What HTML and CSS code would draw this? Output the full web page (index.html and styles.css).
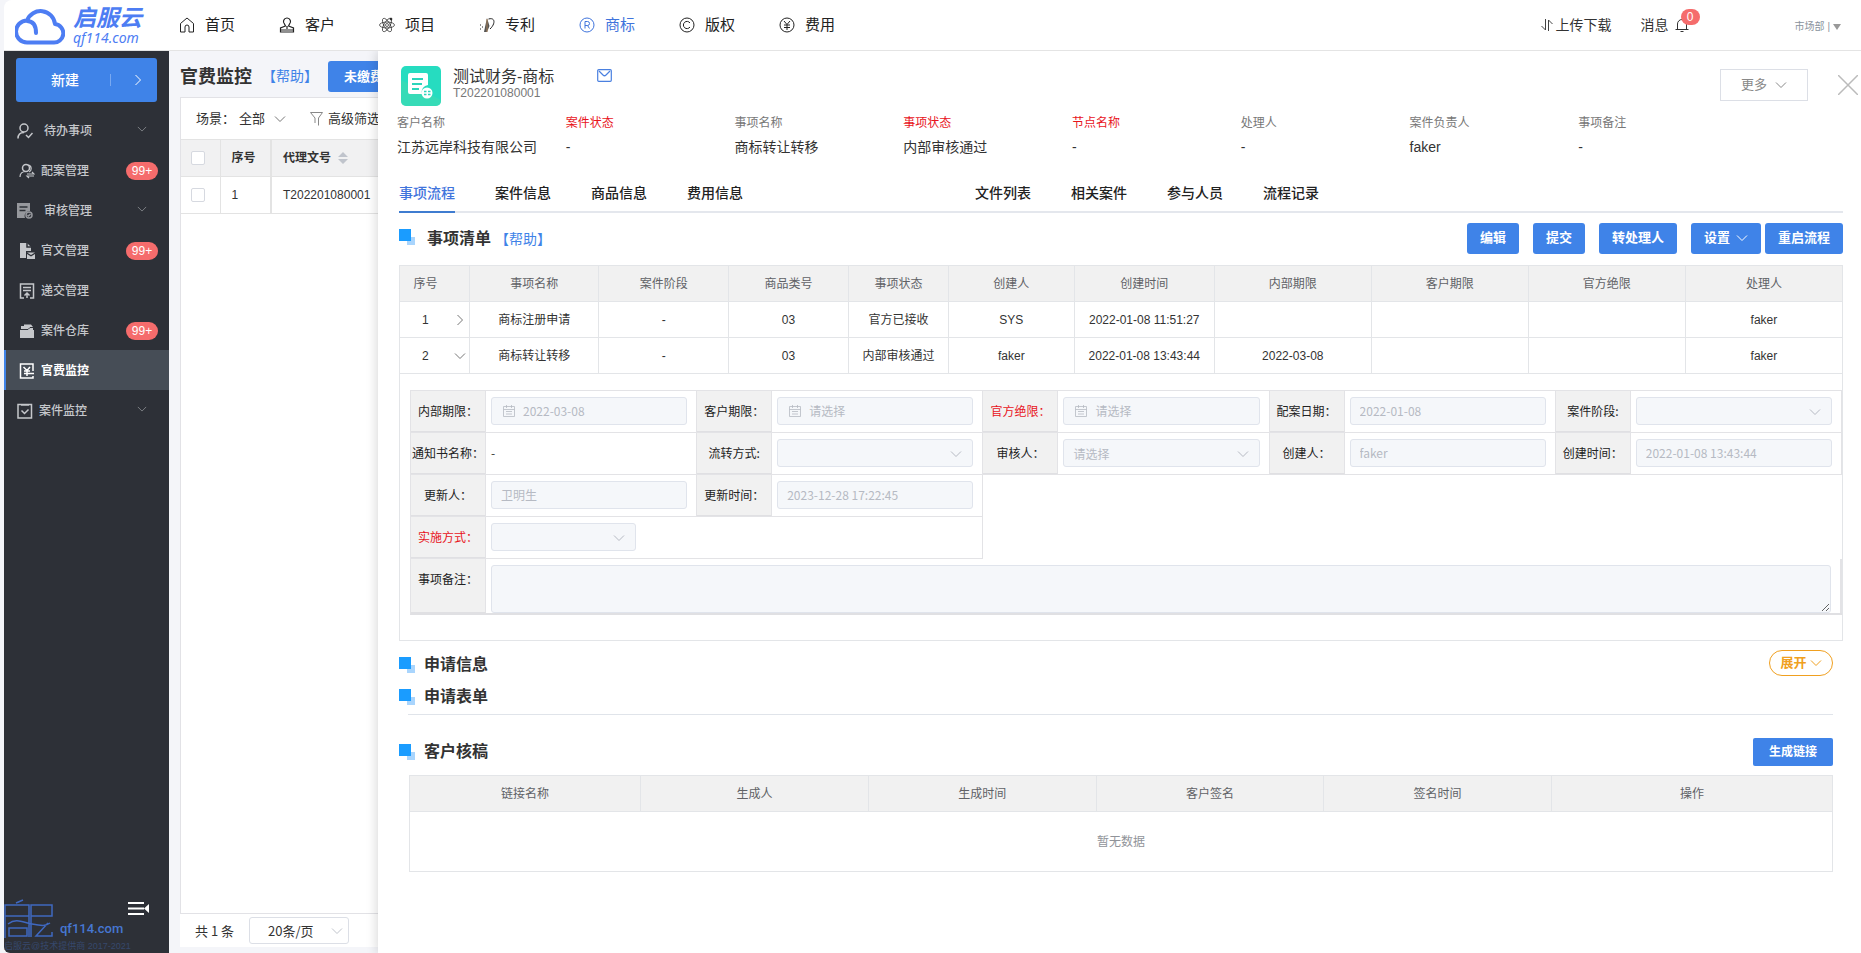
FILE: index.html
```html
<!DOCTYPE html>
<html lang="zh-CN">
<head>
<meta charset="utf-8">
<title>官费监控</title>
<link rel="stylesheet" href="styles.css">
</head>
<body>
<svg class="defs" aria-hidden="true">
  <symbol id="down" viewBox="0 0 12 12"><path d="M1 3.5l5 5 5-5" fill="none" stroke="currentColor"/></symbol>
  <symbol id="right" viewBox="0 0 12 12"><path d="M3.5 1l5 5-5 5" fill="none" stroke="currentColor"/></symbol>
  <symbol id="cal" viewBox="0 0 12 12"><path d="M.5 1.5h11v10H.5zM.5 4.5h11M3.5 0v3M8.500 0v3M3 6.500h6M3 9h6" fill="none" stroke="currentColor" stroke-width=".8"/></symbol>
</svg>
<header class="top">
  <a class="logo" href="#">
    <svg width="50" height="40" viewBox="0 0 50 40"><path d="M12 37.500h26a9 9 0 0 0 2-18.500A14.500 14.500 0 0 0 12 15.500 11 11 0 0 0 12 37.500zM12 16c5 0 9 3 9 12" fill="none" stroke="#4d7df3" stroke-width="4" stroke-linecap="round" stroke-linejoin="round"/></svg>
    <span class="logo-words"><b class="logo-name">启服云</b><i class="logo-site">qf114.com</i></span>
  </a>
  <nav class="nav">
    <a href="#"><svg width="16" height="16" viewBox="0 0 16 16"><path d="M1.500 6.500L8 1l6.500 5.500V15h-4.500v-5a2 2 0 0 0-4 0v5H1.500z"/></svg>首页</a>
    <a href="#"><svg width="16" height="16" viewBox="0 0 16 16"><path d="M8 1a3.500 3.500 0 0 1 2.500 6L9.500 9l5 2v4h-13v-4l5-2-1-2A3.500 3.500 0 0 1 8 1zM1.500 13h13M8 9v3" stroke-width="1.200"/></svg>客户</a>
    <a href="#"><svg width="16" height="16" viewBox="0 0 16 16" stroke-width=".7"><ellipse cx="8" cy="8" rx="7.500" ry="3"/><ellipse cx="8" cy="8" rx="7.500" ry="3" transform="rotate(60 8 8)"/><ellipse cx="8" cy="8" rx="7.500" ry="3" transform="rotate(120 8 8)"/><circle cx="8" cy="8" r="1.500"/><circle cx="12" cy="2" r="1" fill="#222"/></svg>项目</a>
    <a href="#"><svg width="16" height="16" viewBox="0 0 16 16"><path d="M9.500 2c7-2 7 5 1.500 10M1 8h1M3 10h1M1 12h1"/><path d="M8 1l2.500 8L8 15H5l1-5z" fill="#555" stroke="none"/><path d="M8 2v13" stroke="#a9825a"/></svg>专利</a>
    <a href="#" class="on"><svg width="16" height="16" viewBox="0 0 16 16"><circle cx="8" cy="8" r="7"/><path d="M6 11.500v-7h2.500a2 2 0 0 1 0 4H6M8.500 8.500l2 3"/></svg>商标</a>
    <a href="#"><svg width="16" height="16" viewBox="0 0 16 16"><circle cx="8" cy="8" r="7"/><path d="M11 6a3.600 3.600 0 1 0 0 4"/></svg>版权</a>
    <a href="#"><svg width="16" height="16" viewBox="0 0 16 16"><circle cx="8" cy="8" r="7"/><path d="M5 4l3 3.500L11 4M8 7.500V13M5 8h6M5 10.500h6"/></svg>费用</a>
  </nav>
  <div class="top-right">
    <a href="#" class="updown"><svg width="12" height="14" viewBox="0 0 12 14"><path d="M.5 8l4 4V1M7.500 13V2l4 4" fill="none" stroke="#444"/></svg>上传下载</a>
    <a href="#" class="msg">消息<span class="bell"><svg width="14" height="16" viewBox="0 0 14 16"><path d="M.5 12.500h13M2.500 12.500V7a4.500 4.500 0 0 1 9 0v5.500M5.500 14.500h3" fill="none" stroke="#333"/></svg><span class="dot">0</span></span></a>
    <button class="dept">市场部 |<svg width="8" height="6" viewBox="0 0 8 6"><path d="M0 0h8L4 6z" fill="#999"/></svg></button>
  </div>
</header>
<div class="body">
  <aside class="side">
    <button class="new"><span class="new-text">新建</span><span class="new-arrow"><svg width="12" height="12"><use href="#right"/></svg></span></button>
    <nav class="menu">
      <a href="#" class="wide"><svg class="ic" viewBox="0 0 16 16"><circle cx="7" cy="5" r="4"/><path d="M1 15.500c0-4 2-6 6-6M9 12l2.500 2.500L15.500 10"/></svg>待办事项<svg class="arrow"><use href="#down"/></svg></a>
      <a href="#"><svg class="ic" viewBox="0 0 16 16"><circle cx="7" cy="5" r="3.500"/><path d="M1 14c0-4 2-5.500 6-5.500M9 2c4 0 4 6 1 7M8 11h7l-2-2M15 13H8l2 2" stroke-width="1.200"/></svg>配案管理<span class="count">99+</span></a>
      <a href="#" class="wide dim"><svg class="ic" viewBox="0 0 16 16"><path d="M0 0h13v8a5 5 0 0 0-5 7H0z" class="solid"/><path d="M2.500 4h8M2.500 7.500h6" stroke="#2d3037"/><circle cx="12" cy="12" r="3" class="open"/><path d="M10.500 12l1 1 2-2"/></svg>审核管理<svg class="arrow"><use href="#down"/></svg></a>
      <a href="#"><svg class="ic" viewBox="0 0 16 16"><path d="M1 0h7l4 4v4H7v7H1z" class="solid"/><path d="M8 0v4h4" stroke="#2d3037"/><path d="M8 9.500h8l-4 2.500zM8 11l4 2.500 4-2.500v5H8z" class="solid"/></svg>官文管理<span class="count">99+</span></a>
      <a href="#"><svg class="ic" viewBox="0 0 16 16"><path d="M5 15H1.500V1h13v14H11M4 4.500h8M4 7.500h8M8 15v-5M5.500 12.500L8 10l2.500 2.500"/></svg>递交管理</a>
      <a href="#"><svg class="ic" viewBox="0 0 16 16"><path d="M2 7V3h3V1.500h7L14 4v3h1v8H1V7z" class="solid"/><path d="M2 6.500h7l2-2h4" stroke="#2d3037" stroke-width="1"/></svg>案件仓库<span class="count">99+</span></a>
      <a href="#" class="active"><svg class="ic" viewBox="0 0 16 16"><path d="M14 8V1H1.500v14H14v-2M4.500 4L8 7.500 11 4M8 7.500V13M5 8h6M5 10.500h10"/></svg>官费监控</a>
      <a href="#" class="narrow"><svg class="ic" viewBox="0 0 16 16"><path d="M1 1.500h13.500V15H1zM4.500 7.500L7.500 10.500l4-4M4 2h8"/></svg>案件监控<svg class="arrow"><use href="#down"/></svg></a>
    </nav>
    <div class="side-foot">
      <button class="fold" aria-label="收起"><svg width="22" height="13" viewBox="0 0 22 13"><path d="M0 1h16M0 6.500h16M0 12h16" stroke="#fff" stroke-width="2"/><path d="M21 2v9l-5-4.500z" fill="#fff"/></svg></button>
      <div class="brand"><svg width="50" height="40" viewBox="0 0 50 40"><path d="M12 4l7-3M1 39V6h24v32M27 38V6h21v11H27M1 17h24M4 25c8-6 14-2 24 0s14 2 18-1M5 29h18v8H5zM44 24L32 37h16v-4" fill="none" stroke="#3f68c0" stroke-width="1.500"/></svg><span>qf114.com</span></div>
      <small class="copy">启服云@技术提供商 2017-2021</small>
    </div>
  </aside>
  <main class="main">
    <section class="list">
      <div class="list-head"><h1>官费监控</h1><a href="#" class="help">【帮助】</a><button class="btn unpaid">未缴费</button></div>
      <div class="panel">
        <div class="filters"><span>场景：</span><button class="plain">全部<svg width="12" height="12"><use href="#down"/></svg></button><button class="plain adv"><svg width="13" height="14" viewBox="0 0 13 14"><path d="M.5.5h12L8.500 6v7.500M5 11V6L.5.5" fill="none" stroke="#888"/></svg>高级筛选</button></div>
        <table class="grid">
          <thead><tr><th class="c-check"><input type="checkbox" aria-label="全选"></th><th class="c-no">序号</th><th>代理文号<svg class="sort" width="10" height="12" viewBox="0 0 10 12"><path d="M0 5l5-5 5 5zM0 7h10l-5 5z" fill="#c0c4cc"/></svg></th></tr></thead>
          <tbody><tr><td class="c-check"><input type="checkbox" aria-label="选择第1行"></td><td class="c-no">1</td><td>T202201080001</td></tr></tbody>
        </table>
      </div>
      <div class="pager"><span>共 1 条</span><span class="page-size"><select aria-label="每页条数"><option>20条/页</option></select><svg class="caret" width="12" height="12"><use href="#down"/></svg></span></div>
    </section>
    <section class="drawer">
      <div class="case">
        <svg class="case-icon" width="40" height="40" viewBox="0 0 40 40"><rect width="40" height="40" rx="5" fill="#26dcc0"/><path d="M0 14L40 34v1a5 5 0 0 1-5 5H5a5 5 0 0 1-5-5z" fill="#45d9ae" opacity=".5"/><path d="M9 7h16a2 2 0 0 1 2 2v10a7 7 0 0 0-6 9H9a2 2 0 0 1-2-2V9a2 2 0 0 1 2-2z" fill="#fff"/><path d="M11 13h11M11 18h10M11 23h7" stroke="#2bd5bb" stroke-width="2"/><circle cx="26" cy="27" r="5.500" fill="#fff"/><path d="M23 25.500h2.500M27 25.500h2.500M23 28.500h2.500M27 28.500h2.500" stroke="#2bd5bb" stroke-width="1.500"/></svg>
        <div class="case-name"><h2>测试财务-商标</h2><span>T202201080001</span></div>
        <svg class="mail" width="15" height="13" viewBox="0 0 15 13"><rect x=".7" y=".7" width="13.600" height="11.600" rx="1" fill="none" stroke="#4a80e0" stroke-width="1.200"/><path d="M2 2l4 4c1 1 2 1 3 0l4-4" fill="none" stroke="#4a80e0" stroke-width="1.200"/></svg>
        <button class="more">更多<svg width="12" height="12"><use href="#down"/></svg></button>
        <button class="close" aria-label="关闭"><svg width="20" height="20" viewBox="0 0 20 20"><path d="M0 0l20 20M20 0L0 20" stroke="#bbb" stroke-width="1.500"/></svg></button>
      </div>
      <dl class="facts">
        <div><dt>客户名称</dt><dd>江苏远岸科技有限公司</dd></div>
        <div><dt class="red">案件状态</dt><dd>-</dd></div>
        <div><dt>事项名称</dt><dd>商标转让转移</dd></div>
        <div><dt class="red">事项状态</dt><dd>内部审核通过</dd></div>
        <div><dt class="red">节点名称</dt><dd>-</dd></div>
        <div><dt>处理人</dt><dd>-</dd></div>
        <div><dt>案件负责人</dt><dd>faker</dd></div>
        <div><dt>事项备注</dt><dd>-</dd></div>
      </dl>
      <nav class="tabs"><a href="#" class="on">事项流程</a><a href="#">案件信息</a><a href="#">商品信息</a><a href="#">费用信息</a><a href="#" class="second">文件列表</a><a href="#">相关案件</a><a href="#">参与人员</a><a href="#">流程记录</a></nav>
      <div class="sec-head first"><i class="mark"></i><h3>事项清单</h3><a href="#" class="help">【帮助】</a>
        <div class="actions"><button class="btn">编辑</button><button class="btn">提交</button><button class="btn">转处理人</button><span class="pair"><button class="btn">设置<svg width="12" height="12"><use href="#down"/></svg></button><button class="btn">重启流程</button></span></div>
      </div>
      <table class="items">
        <colgroup><col class="w70"><col class="w130"><col class="w130"><col class="w120"><col class="w100"><col class="w126"><col class="w140"><col class="w157"><col class="w157"><col class="w157"><col class="w157"></colgroup>
        <thead><tr><th class="seq">序号</th><th>事项名称</th><th>案件阶段</th><th>商品类号</th><th>事项状态</th><th>创建人</th><th>创建时间</th><th>内部期限</th><th>客户期限</th><th>官方绝限</th><th>处理人</th></tr></thead>
        <tbody>
          <tr><td class="seq"><span class="seq-in">1<svg width="12" height="12"><use href="#right"/></svg></span></td><td>商标注册申请</td><td>-</td><td>03</td><td>官方已接收</td><td>SYS</td><td>2022-01-08 11:51:27</td><td></td><td></td><td></td><td>faker</td></tr>
          <tr><td class="seq"><span class="seq-in">2<svg width="12" height="12"><use href="#down"/></svg></span></td><td>商标转让转移</td><td>-</td><td>03</td><td>内部审核通过</td><td>faker</td><td>2022-01-08 13:43:44</td><td>2022-03-08</td><td></td><td></td><td>faker</td></tr>
          <tr><td colspan="11" class="detail">
            <form class="form">
              <div class="field"><label for="f1">内部期限：</label><div class="ctl cal"><input id="f1" value="2022-03-08" disabled><svg><use href="#cal"/></svg></div></div>
              <div class="field"><label for="f2">客户期限：</label><div class="ctl cal"><input id="f2" placeholder="请选择" disabled><svg><use href="#cal"/></svg></div></div>
              <div class="field"><label for="f3" class="red">官方绝限：</label><div class="ctl cal"><input id="f3" placeholder="请选择" disabled><svg><use href="#cal"/></svg></div></div>
              <div class="field"><label for="f4">配案日期：</label><div class="ctl"><input id="f4" value="2022-01-08" disabled></div></div>
              <div class="field"><label for="f5">案件阶段:</label><div class="ctl sel"><select id="f5" disabled><option></option></select><svg><use href="#down"/></svg></div></div>
              <div class="field"><span class="label">通知书名称：</span><div class="ctl">-</div></div>
              <div class="field"><label for="f6">流转方式:</label><div class="ctl sel"><select id="f6" disabled><option></option></select><svg><use href="#down"/></svg></div></div>
              <div class="field"><label for="f7">审核人：</label><div class="ctl sel"><select id="f7" disabled><option>请选择</option></select><svg><use href="#down"/></svg></div></div>
              <div class="field"><label for="f8">创建人：</label><div class="ctl"><input id="f8" value="faker" disabled></div></div>
              <div class="field"><label for="f9">创建时间：</label><div class="ctl"><input id="f9" value="2022-01-08 13:43:44" disabled></div></div>
              <div class="field"><label for="f10">更新人：</label><div class="ctl"><input id="f10" value="卫明生" disabled></div></div>
              <div class="field"><label for="f11">更新时间：</label><div class="ctl"><input id="f11" value="2023-12-28 17:22:45" disabled></div></div>
              <div class="field two"><label for="f12" class="red">实施方式：</label><div class="ctl"><div class="short sel"><select id="f12" disabled><option></option></select><svg><use href="#down"/></svg></div></div></div>
              <div class="field all"><label for="f13">事项备注：</label><div class="ctl"><textarea id="f13" disabled></textarea></div></div>
            </form>
          </td></tr>
        </tbody>
      </table>
      <div class="sec-head"><i class="mark"></i><h3>申请信息</h3><button class="expand">展开<svg width="12" height="12"><use href="#down"/></svg></button></div>
      <div class="sec-head"><i class="mark"></i><h3>申请表单</h3></div>
      <hr class="rule">
      <div class="sec-head review"><i class="mark"></i><h3>客户核稿</h3><button class="btn link">生成链接</button></div>
      <div class="links-wrap">
        <table class="links">
          <colgroup><col class="l-name"><col class="l"><col class="l"><col class="l"><col class="l"><col></colgroup>
          <thead><tr><th>链接名称</th><th>生成人</th><th>生成时间</th><th>客户签名</th><th>签名时间</th><th>操作</th></tr></thead>
          <tbody><tr><td colspan="6">暂无数据</td></tr></tbody>
        </table>
      </div>
    </section>
  </main>
</div>
</body>
</html>
```
FILE: styles.css
```css
* { box-sizing: border-box; }
body { margin: 0; padding-left: 4px; height: 100vh; display: flex; flex-direction: column; overflow: hidden; background: #f4f5f9; color: #333; font: 12px/18px "Liberation Sans", "Noto Sans CJK SC", sans-serif; }
a { color: inherit; text-decoration: none; }
h1, h2, h3, dl, dd { margin: 0; font-weight: 400; }
button, input, select, textarea { font: inherit; color: inherit; margin: 0; }
button { border: 0; background: none; padding: 0; cursor: pointer; display: inline-flex; align-items: center; justify-content: center; }
svg { flex: none; display: block; }
table { border-collapse: collapse; table-layout: fixed; width: 100%; }
.defs { position: absolute; width: 0; height: 0; }

.top { flex: none; height: 51px; display: flex; align-items: center; background: #fff; border-bottom: 1px solid #e4e4e4; border-top-left-radius: 8px; padding-right: 20px; }
.logo { display: flex; align-items: center; gap: 8px; width: 165px; padding-left: 11px; color: #4d7df3; }
.logo-words { display: flex; flex-direction: column; padding-bottom: 2px; }
.logo-name { font-size: 23px; line-height: 27px; font-style: italic; font-family: "Noto Sans CJK SC", sans-serif; }
.logo-site { font: italic 14px/15px "Noto Sans", sans-serif; }
.nav { display: flex; padding-left: 10px; }
.nav a { width: 100px; display: flex; align-items: center; gap: 10px; font-size: 15px; color: #222; }
.nav svg { fill: none; stroke: currentColor; }
.nav .on { color: #3f74dc; }
.top-right { margin-left: auto; display: flex; align-items: center; font-size: 14px; }
.updown, .msg { display: flex; align-items: center; gap: 3px; }
.msg { margin-left: 29px; gap: 6px; }
.bell { position: relative; }
.dot { position: absolute; left: 6px; top: -8px; width: 19px; height: 16px; border-radius: 8px; background: #f56c6c; color: #fff; font-size: 12px; line-height: 16px; text-align: center; }
.dept { margin-left: 106px; padding-top: 3px; font-size: 10px; color: #8a939d; gap: 3px; }

.body { flex: 1; min-height: 0; display: flex; }
.side { width: 165px; flex: none; display: flex; flex-direction: column; background: #2d3037; border-bottom-left-radius: 6px; }
.new { margin: 7px 12px 8px; height: 44px; border-radius: 3px; background: #3f83e8; color: #fff; font-size: 14px; font-weight: 500; }
.new-text { flex: 1; text-align: center; padding-left: 4px; }
.new-arrow { flex: none; width: 47px; height: 12px; border-left: 1px solid #79a9f1; display: flex; align-items: center; justify-content: center; padding-left: 8px; }
.menu a { height: 40px; display: flex; align-items: center; gap: 6px; padding: 1px 11px 0 15px; color: #c5c7cb; font-weight: 500; }
.menu .wide { padding-left: 13px; gap: 11px; }
.menu .narrow { padding-left: 13px; gap: 6px; }
.menu .active { background: #464d56; box-shadow: inset 2px 0 #3f83e8; color: #fff; font-weight: 700; }
.ic { width: 16px; height: 16px; fill: none; stroke: currentColor; stroke-width: 1.5; }
.dim .ic { color: #96989d; }
.ic .solid { fill: currentColor; stroke: none; }
.ic .open { fill: #2d3037; }
.arrow { width: 10px; height: 10px; margin: 0 11px 4px auto; color: #8a8d93; }
.count { margin-left: auto; width: 32px; height: 18px; border-radius: 9px; background: #f56c6c; color: #fff; text-align: center; font-weight: 400; }
.side-foot { margin-top: auto; display: flex; flex-direction: column; }
.fold { align-self: flex-end; margin-right: 19px; height: 13px; margin-bottom: -16px; }
.brand { display: flex; align-items: flex-end; gap: 6px; color: #4677d2; font: 500 13px/20px Roboto, sans-serif; }
.copy { font-size: 9px; line-height: 14px; color: #36486c; white-space: nowrap; }

.main { flex: 1; min-width: 0; position: relative; display: flex; overflow: hidden; }
.list { flex: 1; display: flex; flex-direction: column; padding: 0 0 6px 11px; }
.list-head { height: 46px; display: flex; align-items: center; padding-top: 5px; }
.list-head h1 { font-size: 18px; font-weight: 700; line-height: 24px; }
.help { font-size: 14px; color: #3f83e8; }
.list-head .help { margin: 0 0 2px 10px; }
.btn { height: 31px; padding: 0 13px; border-radius: 3px; background: #3f83e8; color: #fff; font-size: 13px; font-weight: 700; gap: 6px; white-space: nowrap; }
.unpaid { margin-left: 10px; padding: 0 16px; }
.panel { flex: 1; background: #fff; border: 1px solid #e2e2e6; }
.filters { height: 41px; display: flex; align-items: center; padding-left: 15px; font-size: 13px; }
.plain { gap: 9px; margin-left: 4px; color: #333; }
.plain svg { color: #777; }
.adv { margin-left: 24px; gap: 5px; }
.grid th, .grid td { height: 37px; padding: 0 11px; border: 1px solid #e3e3e3; border-left: 0; text-align: left; font-weight: 400; color: #333; }
.grid th { background: #f1f1f2; font-weight: 700; }
.grid .c-check { width: 39px; padding: 0 10px; }
.grid .c-no { width: 51px; border-right-width: 2px; }
.grid input { appearance: none; display: block; width: 14px; height: 14px; border: 1px solid #d6d9e0; border-radius: 2px; background: #fff; }
.sort { display: inline-block; margin-left: 7px; vertical-align: -2px; }
.pager { height: 33px; flex: none; background: #fff; display: flex; align-items: center; gap: 15px; padding-left: 15px; font: 13px/18px "Noto Sans CJK SC", sans-serif; }
.page-size { position: relative; }
.page-size select { appearance: none; width: 100px; height: 27px; border: 1px solid #dcdfe6; border-radius: 3px; background: #fff; padding: 0 18px; }
.caret { position: absolute; right: 6px; top: 8px; color: #c0c4cc; }

.drawer { position: absolute; inset: 0 0 0 209px; background: #fff; box-shadow: -2px 0 10px rgba(0,0,0,.14); padding: 15px 18px 0 21px; overflow: auto; }
.case { display: flex; align-items: flex-start; height: 48px; padding-left: 2px; margin-right: -15px; }
.case-name { margin-left: 12px; padding-top: 1px; width: 144px; display: flex; flex-direction: column; color: #777; line-height: 13px; }
.case-name h2 { font-size: 16px; line-height: 20px; color: #333; }
.mail { margin-top: 3px; }
.more { margin: 3px 30px 0 auto; width: 88px; height: 32px; border: 1px solid #dcdfe6; color: #888; font-size: 13px; gap: 8px; }
.close { margin-top: 9px; }
.facts { display: grid; grid-template-columns: repeat(8, 1fr); padding-right: 96px; margin-left: -2px; white-space: nowrap; }
.facts dt { color: #777; line-height: 18px; }
.facts dd { font-size: 14px; line-height: 20px; margin-top: 5px; }
.facts dt.red, .form label.red { color: #e8141c; }
.tabs { display: flex; gap: 40px; height: 42px; margin-top: 14px; border-bottom: 2px solid #e4e7ed; padding-top: 13px; font-size: 14px; font-weight: 500; color: #222; line-height: 18px; }
.tabs a { height: 29px; border-bottom: 2px solid transparent; }
.tabs .on { color: #3f74dc; border-color: #3f7cd0; }
.tabs .second { margin-left: 192px; }
.sec-head { display: flex; align-items: center; height: 32px; gap: 9px; }
.sec-head h3 { font-size: 16px; font-weight: 700; line-height: 24px; }
.mark { position: relative; width: 16px; height: 16px; background: linear-gradient(#1a9cff, #1a9cff) 0 0 / 12px 12px no-repeat, linear-gradient(#a9d5fd, #a9d5fd) 8px 8px / 8px 8px no-repeat; }
.first { height: 52px; gap: 12px; }
.first .mark { margin-bottom: 4px; }
.first .help { margin-left: -8px; }
.actions { margin: 0 0 2px auto; display: flex; gap: 14px; }
.pair { display: flex; gap: 4px; }

th, td { border: 1px solid #e3e5e8; padding: 0; text-align: center; font-weight: 400; }
.items th, .links th { height: 36px; background: #f1f1f1; color: #606266; }
.items td { height: 36px; }
.w70 { width: 4.85%; } .w130 { width: 8.97%; } .w120 { width: 8.31%; } .w100 { width: 6.93%; }
.w126 { width: 8.72%; } .w140 { width: 9.7%; } .w157 { width: 10.88%; }
.seq { padding-right: 18px; }
td.seq { padding-right: 3px; }
.seq-in { display: flex; align-items: center; justify-content: space-between; padding-left: 22px; }
.seq-in svg { color: #777; }
.items .detail { padding: 16px 0 25px 10px; text-align: left; }
.form { display: grid; grid-template-columns: repeat(5, 1fr); border-top: 1px solid #e3e3e6; border-left: 1px solid #e3e3e6; border-bottom: 2px solid #e0e0e3; font-family: "Noto Sans CJK SC", sans-serif; }
.field { display: flex; height: 42px; border-right: 1px solid #e3e3e6; border-bottom: 1px solid #e3e3e6; }
.field label, .field .label { width: 75px; flex: none; background: #f1f1f1; border-right: 1px solid #e3e3e6; border-bottom: 1px solid #e0e0e3; text-align: center; line-height: 40px; white-space: nowrap; color: #222; }
.ctl { flex: 1; min-width: 0; position: relative; padding: 6px 9px 0 5px; line-height: 28px; }
.form input, .form select, .form textarea { appearance: none; display: block; width: 100%; height: 28px; border: 1px solid #e0e4ec; border-radius: 3px; background: #f5f7fa; color: #b6bac3; padding: 0 9px; opacity: 1; }
.form input::placeholder { color: #b6bac3; }
.form .cal input { padding-left: 31px; }
.cal svg { position: absolute; left: 17px; top: 14px; width: 12px; height: 12px; color: #b6bac3; }
.sel svg { position: absolute; right: 20px; top: 15px; width: 12px; height: 12px; color: #b6bac3; }
.short { position: relative; width: 145px; }
.short svg { right: 11px; top: 9px; }
.two { grid-column: 1 / 3; }
.all { grid-column: 1 / -1; height: 54px; border-bottom: 0; border-right-width: 2px; }
.form textarea { height: 48px; resize: vertical; }
.expand { margin: 0 10px 4px auto; width: 64px; height: 26px; border: 1px solid #f0a020; border-radius: 13px; color: #f0a020; font-size: 13px; font-weight: 700; gap: 3px; }
.items + .sec-head { margin-top: 8px; }
.rule { margin: 1px 10px 0 9px; border: 0; border-top: 1px solid #e0e4ea; }
.review { margin-top: 21px; }
.link { margin: 0 10px 0 auto; height: 28px; padding: 0 16px; font-size: 12px; border-radius: 2px; }
.links-wrap { padding: 7px 10px 0; }
.l-name { width: 16.25%; }
.l { width: 16%; }
.links td { height: 60px; color: #909399; }
```
